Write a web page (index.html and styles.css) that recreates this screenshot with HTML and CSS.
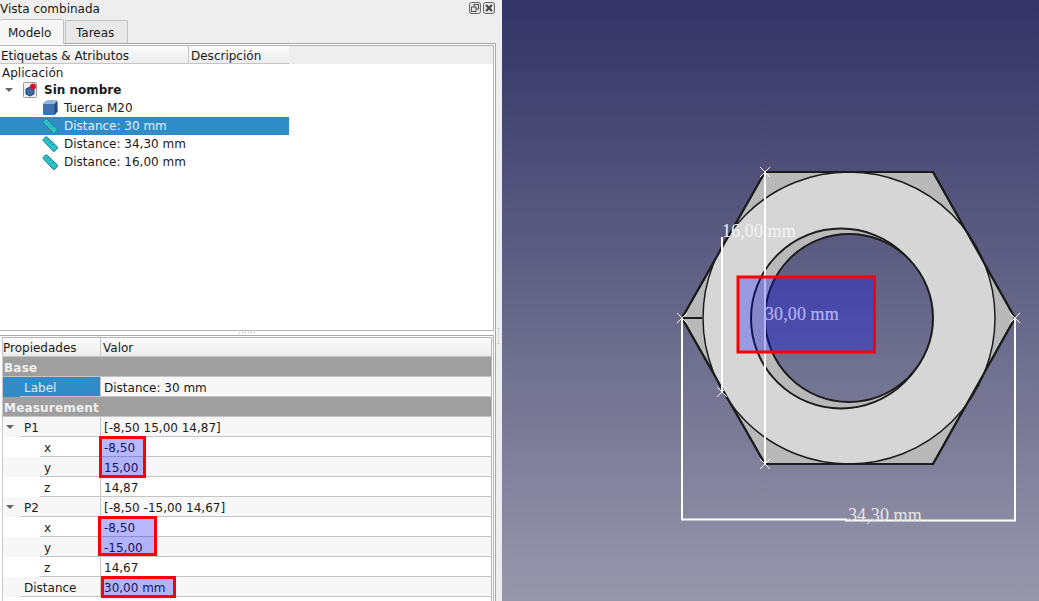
FILE: index.html
```html
<!DOCTYPE html>
<html lang="es">
<head>
    <meta charset="UTF-8">
    <title>Vista combinada</title>
    <link rel="stylesheet" href="styles.css">
</head>
<body>
<svg class="defs" width="0" height="0">
    <defs>
        <symbol id="ruler" viewBox="0 0 16 16">
            <path d="M1 4.500 Q1 3.500 2 2.500 L3.500 1 Q4.500 0.500 5.500 1.500 L15.500 11 L15.500 12 L12.500 15.500 L11.500 15.500 Z" fill="#2cc3cc" stroke="#147f8a" stroke-width="1"/>
            <path d="M5 4.500 L6.500 3 M7.500 7 L9 5.500 M10 9.500 L11.500 8" stroke="#147f8a" stroke-width="1"/>
        </symbol>
    </defs>
</svg>
<div class="app">
    <aside class="side">
        <div class="dock-title">
            <span>Vista combinada</span>
            <div class="dock-buttons">
                <svg width="12" height="12" viewBox="0 0 12 12">
                    <rect x="0.5" y="0.5" width="11" height="11" rx="2" fill="#e4e4e4" stroke="#666"/>
                    <rect x="5" y="2.5" width="4.5" height="4.5" fill="none" stroke="#555"/>
                    <rect x="2.5" y="5" width="4.5" height="4.5" fill="#e4e4e4" stroke="#555"/>
                </svg>
                <svg width="12" height="12" viewBox="0 0 12 12">
                    <rect x="0.5" y="0.5" width="11" height="11" rx="2" fill="#e4e4e4" stroke="#666"/>
                    <path d="M3 3 L9 9 M9 3 L3 9" stroke="#444" stroke-width="2"/>
                </svg>
            </div>
        </div>
        <div class="tabs">
            <div class="tab tab-active">Modelo</div>
            <div class="tab">Tareas</div>
        </div>
        <div class="pane">
            <div class="tree">
                <div class="tree-head">
                    <div class="head-cell head-label">Etiquetas &amp; Atributos</div>
                    <div class="head-cell head-desc">Descripción</div>
                </div>
                <div class="tree-body">
                    <div class="tree-row tree-root">Aplicación</div>
                    <div class="tree-row tree-doc">
                        <span class="arrow"></span>
                        <svg class="doc-icon" width="15" height="16" viewBox="0 0 15 16">
                            <rect x="0.5" y="0.5" width="13" height="15" rx="1" fill="#f2f2f2" stroke="#999"/>
                            <path d="M3 7 L7 5 L11 7 L11 12 L7 14 L3 12 Z" fill="#3a6ea8" stroke="#1c3c66"/>
                            <circle cx="10" cy="4.500" r="3" fill="#e01020"/>
                        </svg>
                        <b>Sin nombre</b>
                    </div>
                    <div class="tree-row tree-item">
                        <svg class="item-icon" width="16" height="16" viewBox="0 0 16 16">
                            <path d="M1 4 L4 1 Q4.500 0.500 5.500 0.500 L15 0.500 L15.500 11.500 L12.500 15 L2 15 Q1 15 1 14 Z" fill="#3f72b0"/>
                            <path d="M1 4 L4 1 L15.500 1 L12.500 4 Z" fill="#8fb6e2"/>
                            <path d="M12.500 4 L15.500 1 L15.500 11.500 L12.500 15 Z" fill="#234a7c"/>
                        </svg>
                        <span>Tuerca M20</span>
                    </div>
                    <div class="tree-row tree-item tree-selected">
                        <svg class="item-icon" width="16" height="16"><use href="#ruler"/></svg>
                        <span>Distance: 30 mm</span>
                    </div>
                    <div class="tree-row tree-item">
                        <svg class="item-icon" width="16" height="16"><use href="#ruler"/></svg>
                        <span>Distance: 34,30 mm</span>
                    </div>
                    <div class="tree-row tree-item">
                        <svg class="item-icon" width="16" height="16"><use href="#ruler"/></svg>
                        <span>Distance: 16,00 mm</span>
                    </div>
                </div>
            </div>
            <div class="split-h"><span class="dots-h"></span></div>
            <div class="props">
                <div class="props-inner">
                    <div class="prop-head">
                        <div class="prop-head-name">Propiedades</div>
                        <div class="prop-head-value">Valor</div>
                    </div>
                    <div class="prop-group">Base</div>
                    <div class="prop-row row-alt">
                        <div class="prop-name name-selected"><span class="name-text indent-1">Label</span></div>
                        <div class="prop-value">Distance: 30 mm</div>
                    </div>
                    <div class="prop-group">Measurement</div>
                    <div class="prop-row row-alt">
                        <div class="prop-name"><span class="arrow arrow-prop"></span><span class="name-text indent-1">P1</span></div>
                        <div class="prop-value">[-8,50 15,00 14,87]</div>
                    </div>
                    <div class="prop-row">
                        <div class="prop-name"><span class="name-text indent-2">x</span></div>
                        <div class="prop-value">-8,50</div>
                    </div>
                    <div class="prop-row row-alt">
                        <div class="prop-name"><span class="name-text indent-2">y</span></div>
                        <div class="prop-value">15,00</div>
                    </div>
                    <div class="prop-row">
                        <div class="prop-name"><span class="name-text indent-2">z</span></div>
                        <div class="prop-value">14,87</div>
                    </div>
                    <div class="prop-row row-alt">
                        <div class="prop-name"><span class="arrow arrow-prop"></span><span class="name-text indent-1">P2</span></div>
                        <div class="prop-value">[-8,50 -15,00 14,67]</div>
                    </div>
                    <div class="prop-row">
                        <div class="prop-name"><span class="name-text indent-2">x</span></div>
                        <div class="prop-value">-8,50</div>
                    </div>
                    <div class="prop-row row-alt">
                        <div class="prop-name"><span class="name-text indent-2">y</span></div>
                        <div class="prop-value">-15,00</div>
                    </div>
                    <div class="prop-row">
                        <div class="prop-name"><span class="name-text indent-2">z</span></div>
                        <div class="prop-value">14,67</div>
                    </div>
                    <div class="prop-row row-alt">
                        <div class="prop-name"><span class="name-text indent-1">Distance</span></div>
                        <div class="prop-value">30,00 mm</div>
                    </div>
                </div>
            </div>
        </div>
        <div class="mark mark-xy1"></div>
        <div class="mark mark-xy2"></div>
        <div class="mark mark-dist"></div>
        <span class="dots-v"></span>
    </aside>

    <main class="view">
        <svg class="scene" width="537" height="601" viewBox="502 0 537 601">
            <defs>
                <linearGradient id="sky" gradientUnits="userSpaceOnUse" x1="0" y1="0" x2="0" y2="601">
                    <stop offset="0" stop-color="#333366"/>
                    <stop offset="1" stop-color="#9797ab"/>
                </linearGradient>
            </defs>
            <rect x="502" y="0" width="537" height="601" fill="url(#sky)"/>

            <!-- nut -->
            <g stroke="#1c1c1c" stroke-width="2" stroke-linejoin="round">
                <path d="M765 172 H933 L1015 318 L933 464 H765 L682 318 Z" fill="#b9b9b9"/>
                <circle cx="849" cy="318" r="146" fill="#d6d6d6" stroke-width="1.500"/>
                <circle cx="841" cy="318.500" r="90" fill="#b9b9b9"/>
                <circle cx="849" cy="318" r="84" fill="url(#sky)"/>
                <path d="M682 318 H702"/>
                <path d="M765 172 H933 L1015 318 L933 464 H765 L682 318 Z" fill="none"/>
            </g>

            <!-- dimensions -->
            <g stroke="#ffffff" stroke-width="2" fill="none">
                <path d="M765 172 V464"/>
                <path d="M722 237 V392"/>
                <path d="M682 318 V519.500 H846 V520.500 H1015 V318"/>
            </g>
            <g stroke="#ffffff" stroke-width="1" fill="none">
                <path d="M760 167 L770 177 M770 167 L760 177"/>
                <path d="M760 459 L770 469 M770 459 L760 469"/>
                <path d="M677 313 L687 323 M687 313 L677 323"/>
                <path d="M1010 313 L1020 323 M1020 313 L1010 323"/>
                <path d="M717 387 L727 397 M727 387 L717 397"/>
            </g>
            <text class="dim-label dim-a" x="722" y="237">16,00 mm</text>
            <text class="dim-label" x="765" y="320">30,00 mm</text>
            <text class="dim-label dim-b" x="848" y="521">34,30 mm</text>

            <rect x="738" y="277" width="136.500" height="75" fill="#0000ff" fill-opacity="0.28" stroke="#ff0000" stroke-width="3"/>
        </svg>
    </main>
</div>
</body>
</html>
```

FILE: styles.css
```css
html, body {
    margin: 0;
    height: 100%;
    overflow: hidden;
}
body {
    font-family: "DejaVu Sans", sans-serif;
    font-size: 12px;
    color: #1a1a1a;
}
.defs {
    position: absolute;
}
.app {
    display: flex;
    height: 601px;
}

/* left dock */
.side {
    position: relative;
    width: 502px;
    flex: none;
    background-color: #eeeeee;
    display: flex;
    flex-direction: column;
}
.dock-title {
    height: 18px;
    display: flex;
    justify-content: space-between;
    padding: 0 7px 0 0;
    line-height: 18px;
}
.dock-buttons {
    display: flex;
    gap: 2px;
    padding-top: 2px;
}
.tabs {
    display: flex;
    height: 25px;
    align-items: flex-end;
    gap: 1px;
}
.tab {
    box-sizing: border-box;
    height: 23px;
    width: 63px;
    padding-left: 10px;
    line-height: 24px;
    background-color: #e8e8e8;
    border: 1px solid #c0c0c0;
    border-bottom: none;
    border-radius: 2px 2px 0 0;
}
.tab-active {
    height: 25px;
    width: 64px;
    padding-left: 8px;
    line-height: 26px;
    background-color: #f6f6f6;
    border-left: none;
    position: relative;
    z-index: 1;
    margin-bottom: -1px;
}
.pane {
    margin-right: 6px;
    border-top: 1px solid #a8a8a8;
    border-right: 1px solid #a8a8a8;
    padding-top: 1px;
    flex: 1;
    display: flex;
    flex-direction: column;
    min-height: 0;
    background-color: #ffffff;
}
.tree {
    box-sizing: border-box;
    height: 286px;
    border-top: 1px solid #b4b4b4;
    border-right: 1px solid #b4b4b4;
    border-bottom: 1px solid #b4b4b4;
    margin-right: 1px;
    background-color: #ffffff;
}
.tree-head {
    display: flex;
    height: 18px;
    background-color: #eeeeee;
}
.head-cell {
    box-sizing: border-box;
    background: linear-gradient(#fbfbfb, #ececec);
    border-bottom: 1px solid #c4c4c4;
    line-height: 20px;
    padding-left: 1px;
}
.head-label {
    width: 189px;
    border-right: 1px solid #c8c8c8;
}
.head-desc {
    width: 100px;
    padding-left: 2px;
}
.tree-body {
    width: 289px;
}
.tree-row {
    height: 18px;
    line-height: 18px;
    display: flex;
    align-items: center;
}
.tree-root {
    height: 17px;
    padding-left: 2px;
}
.tree-doc {
    padding-left: 5px;
}
.tree-doc b {
    margin-left: 6px;
}
.doc-icon {
    margin-left: 10px;
}
.tree-item {
    padding-left: 42px;
}
.item-icon {
    margin-right: 6px;
    flex: none;
}
.tree-selected {
    background-color: #308cc6;
    color: #e4f1fa;
}
.arrow {
    display: inline-block;
    width: 0;
    height: 0;
    border-left: 4px solid transparent;
    border-right: 4px solid transparent;
    border-top: 4px solid #666666;
}
.split-h {
    height: 4px;
    position: relative;
}
.dots-h {
    position: absolute;
    left: 239px;
    top: 1px;
    width: 17px;
    height: 1px;
    background-image: linear-gradient(90deg, #b0b0b0 1px, transparent 1px);
    background-size: 3px 1px;
}
.dots-v {
    position: absolute;
    left: 498px;
    top: 328px;
    width: 1px;
    height: 17px;
    background-image: linear-gradient(#b0b0b0 1px, transparent 1px);
    background-size: 1px 3px;
}

/* property table */
.props {
    flex: 1;
    border-top: 1px solid #a8a8a8;
    border-right: 1px solid #b4b4b4;
    margin-right: 1px;
    padding-top: 1px;
}
.props-inner {
    margin-left: 2px;
    margin-right: 1px;
    height: 100%;
    box-sizing: border-box;
    border-top: 1px solid #b4b4b4;
    border-right: 1px solid #b4b4b4;
    border-left: 1px solid #c8c8c8;
    background-color: #ffffff;
}
.prop-head {
    display: flex;
    height: 19px;
    line-height: 20px;
    background: linear-gradient(#fbfbfb, #ececec);
    border-bottom: 1px solid #c4c4c4;
    box-sizing: border-box;
}
.prop-head-name {
    box-sizing: border-box;
    width: 98px;
    border-right: 1px solid #c8c8c8;
}
.prop-head-value {
    padding-left: 2px;
}
.prop-group {
    box-sizing: border-box;
    height: 20px;
    line-height: 22px;
    padding-left: 1px;
    font-weight: bold;
    color: #f0f0f0;
    background-color: #9f9f9f;
    border-bottom: 1px solid #c4c4c4;
    letter-spacing: 0.2px;
}
.prop-row {
    display: flex;
    height: 20px;
    line-height: 22px;
    background-color: #ffffff;
}
.row-alt {
    background-color: #f7f7f7;
}
.prop-name {
    box-sizing: border-box;
    width: 97px;
    flex: none;
    display: flex;
    position: relative;
}
.name-text {
    flex: 1;
    box-sizing: border-box;
    border-bottom: 1px solid #c4c4c4;
    overflow: hidden;
}
.indent-1 {
    margin-left: 17px;
    padding-left: 4px;
}
.indent-2 {
    margin-left: 37px;
    padding-left: 4px;
}
.name-selected {
    background-color: #308cc6;
    color: #dcecf7;
}
.arrow-prop {
    position: absolute;
    left: 3px;
    top: 8px;
}
.prop-value {
    flex: 1;
    box-sizing: border-box;
    padding-left: 3px;
    border-left: 1px solid #c8c8c8;
    border-bottom: 1px solid #c4c4c4;
    overflow: hidden;
}

/* red annotation boxes over the table */
.mark {
    position: absolute;
    box-sizing: border-box;
    border: 3px solid #ff0000;
    background-color: rgba(0, 0, 255, 0.28);
}
.mark-xy1 {
    left: 99px;
    top: 436px;
    width: 47px;
    height: 42px;
}
.mark-xy2 {
    left: 98px;
    top: 516px;
    width: 59px;
    height: 40px;
}
.mark-dist {
    left: 101px;
    top: 576px;
    width: 75px;
    height: 22px;
}

/* 3d view */
.view {
    flex: 1;
    min-width: 0;
}
.scene {
    display: block;
}
.dim-label {
    font-family: "Liberation Serif", serif;
    font-size: 18px;
    letter-spacing: 0.1px;
    fill: #ffffff;
}
.dim-a {
    fill: #f4f4f4;
}
.dim-b {
    fill: #e6e6e6;
}
```
